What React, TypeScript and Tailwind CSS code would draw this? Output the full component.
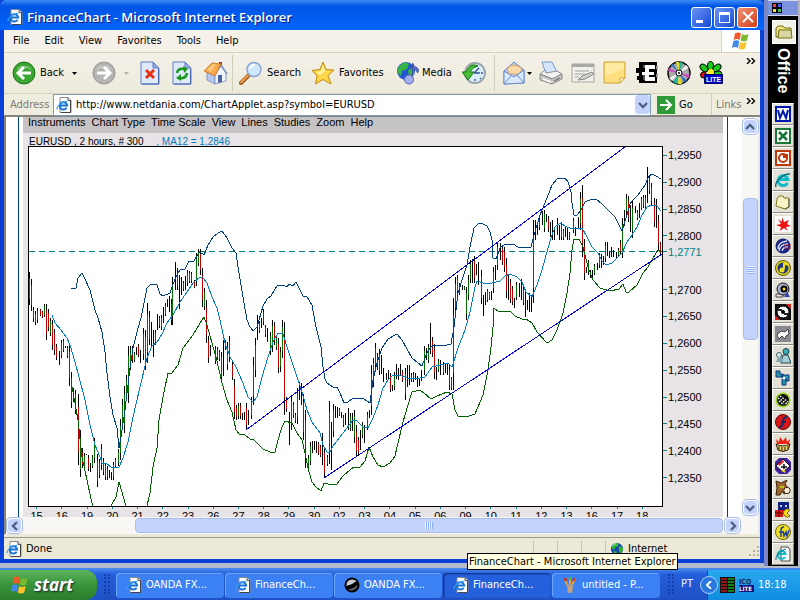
import React, { useState } from "react";

type Candle = [number, number, number, string];

// x, high, low, kind (g = up, r = down, k = flat)
const candles: Candle[] = [
  [29, 272, 305, "g"], [31, 279, 311, "r"], [33, 307, 322, "r"], [35, 311, 325, "g"], [37, 308, 323, "g"], [40, 309, 316, "r"],
  [42, 311, 318, "r"], [44, 304, 317, "g"], [46, 304, 340, "r"], [48, 309, 331, "r"], [50, 318, 336, "g"], [52, 320, 350, "r"],
  [54, 329, 355, "r"], [56, 344, 360, "r"], [59, 351, 365, "k"], [61, 340, 358, "g"], [63, 339, 352, "r"], [65, 346, 348, "k"],
  [67, 346, 358, "r"], [69, 344, 386, "r"], [71, 372, 408, "r"], [73, 388, 402, "g"], [75, 390, 414, "g"], [78, 394, 465, "r"],
  [80, 430, 477, "g"], [82, 448, 468, "r"], [84, 453, 469, "g"], [86, 454, 455, "k"], [88, 455, 471, "r"], [90, 463, 472, "k"],
  [92, 455, 468, "g"], [94, 438, 463, "g"], [97, 454, 487, "r"], [99, 459, 478, "r"], [101, 444, 470, "g"], [103, 458, 475, "r"],
  [105, 463, 480, "r"], [107, 466, 480, "r"], [109, 470, 478, "k"], [111, 472, 480, "k"], [113, 462, 480, "g"], [115, 458, 468, "g"],
  [118, 449, 466, "g"], [120, 419, 460, "g"], [122, 399, 430, "g"], [124, 386, 433, "g"], [126, 375, 400, "g"], [128, 346, 403, "g"],
  [130, 346, 370, "g"], [132, 346, 363, "r"], [134, 352, 362, "g"], [136, 347, 355, "k"], [138, 344, 357, "r"], [140, 350, 363, "k"],
  [143, 328, 360, "g"], [145, 330, 370, "g"], [147, 303, 363, "g"], [149, 311, 345, "r"], [151, 322, 348, "k"], [153, 330, 357, "k"],
  [155, 330, 345, "g"], [157, 314, 330, "k"], [159, 316, 328, "r"], [161, 315, 330, "g"], [163, 307, 323, "k"], [165, 303, 316, "g"],
  [167, 299, 307, "k"], [169, 296, 312, "k"], [171, 299, 325, "r"], [172, 277, 325, "g"], [175, 262, 290, "k"], [177, 268, 290, "r"],
  [179, 275, 309, "k"], [181, 277, 295, "k"], [183, 281, 291, "r"], [185, 276, 290, "k"], [187, 270, 286, "g"], [189, 271, 283, "g"],
  [191, 272, 283, "r"], [194, 280, 288, "r"], [196, 253, 286, "g"], [198, 249, 266, "g"], [200, 249, 275, "r"], [202, 268, 307, "r"],
  [204, 288, 310, "g"], [206, 300, 343, "r"], [208, 336, 363, "r"], [210, 345, 356, "k"], [215, 346, 364, "g"], [217, 347, 360, "r"],
  [219, 350, 361, "r"], [221, 352, 382, "r"], [223, 340, 376, "k"], [225, 340, 350, "g"], [227, 342, 370, "g"], [229, 336, 362, "r"],
  [232, 362, 380, "r"], [234, 379, 419, "r"], [236, 405, 420, "r"], [238, 403, 419, "g"], [240, 403, 419, "r"], [242, 413, 420, "k"],
  [244, 412, 420, "k"], [246, 403, 430, "r"], [248, 410, 425, "k"], [251, 397, 419, "g"], [253, 357, 405, "g"], [255, 338, 377, "g"],
  [257, 315, 340, "k"], [259, 321, 333, "g"], [261, 318, 328, "k"], [263, 309, 325, "r"], [265, 325, 337, "r"], [267, 328, 342, "k"],
  [270, 332, 355, "g"], [272, 320, 352, "g"], [274, 322, 345, "r"], [276, 335, 350, "g"], [278, 338, 373, "r"], [280, 347, 372, "g"],
  [282, 320, 358, "g"], [284, 322, 415, "r"], [286, 397, 412, "r"], [289, 412, 445, "k"], [291, 395, 430, "g"], [293, 402, 418, "r"],
  [295, 413, 423, "r"], [297, 388, 424, "g"], [299, 382, 400, "k"], [301, 383, 405, "k"], [303, 394, 440, "r"], [305, 410, 468, "r"],
  [308, 455, 472, "g"], [310, 442, 465, "g"], [312, 441, 453, "k"], [314, 441, 450, "k"], [316, 441, 453, "k"], [318, 442, 455, "r"],
  [320, 445, 457, "r"], [322, 433, 465, "k"], [324, 448, 478, "r"], [327, 455, 466, "g"], [329, 401, 464, "g"], [331, 422, 470, "k"],
  [333, 404, 437, "g"], [335, 406, 418, "k"], [337, 407, 418, "k"], [339, 408, 416, "r"], [341, 412, 418, "k"], [343, 415, 427, "r"],
  [345, 413, 425, "k"], [348, 408, 430, "k"], [350, 413, 431, "g"], [352, 413, 431, "k"], [354, 410, 443, "g"], [356, 425, 457, "r"],
  [358, 437, 455, "r"], [360, 430, 450, "k"], [362, 422, 438, "g"], [364, 425, 443, "k"], [367, 412, 430, "g"], [369, 410, 418, "k"],
  [371, 365, 415, "g"], [373, 358, 387, "g"], [375, 343, 370, "r"], [377, 353, 370, "r"], [379, 349, 375, "g"], [381, 355, 374, "k"],
  [383, 368, 382, "k"], [386, 373, 380, "k"], [388, 370, 380, "k"], [390, 373, 392, "r"], [392, 385, 391, "k"], [394, 372, 390, "g"],
  [396, 364, 379, "k"], [398, 368, 380, "k"], [400, 364, 375, "k"], [402, 370, 382, "r"], [405, 368, 400, "r"], [407, 365, 387, "k"],
  [409, 365, 385, "k"], [411, 373, 382, "g"], [413, 372, 382, "r"], [415, 373, 380, "k"], [417, 376, 387, "k"], [419, 378, 386, "k"],
  [421, 370, 381, "k"], [424, 346, 375, "g"], [426, 348, 360, "k"], [428, 344, 363, "g"], [430, 323, 354, "k"], [432, 337, 357, "r"],
  [434, 344, 379, "r"], [436, 367, 380, "k"], [438, 359, 372, "g"], [440, 360, 375, "k"], [443, 362, 375, "g"], [445, 363, 373, "k"],
  [447, 363, 375, "k"], [449, 365, 390, "r"], [451, 377, 390, "r"], [453, 298, 390, "g"], [455, 277, 315, "g"], [457, 275, 295, "g"],
  [459, 283, 295, "r"], [462, 285, 290, "k"], [464, 286, 290, "g"], [466, 287, 320, "g"], [468, 275, 300, "g"], [470, 260, 283, "g"],
  [472, 259, 283, "k"], [474, 256, 283, "r"], [476, 264, 275, "k"], [478, 262, 285, "k"], [481, 270, 304, "r"], [483, 295, 316, "k"],
  [485, 292, 305, "k"], [487, 289, 302, "g"], [489, 292, 300, "g"], [491, 291, 300, "k"], [493, 267, 293, "g"], [495, 265, 280, "k"],
  [497, 242, 270, "g"], [500, 243, 260, "k"], [502, 246, 265, "r"], [504, 247, 272, "r"], [506, 258, 298, "r"], [508, 275, 300, "k"],
  [510, 279, 303, "r"], [512, 286, 305, "r"], [514, 298, 308, "k"], [516, 282, 300, "g"], [519, 283, 297, "k"], [521, 279, 300, "k"],
  [523, 286, 305, "r"], [525, 292, 317, "k"], [527, 300, 310, "k"], [529, 293, 312, "k"], [531, 295, 312, "k"], [533, 220, 303, "g"],
  [535, 220, 240, "k"], [537, 223, 235, "k"], [539, 216, 230, "r"], [542, 211, 225, "k"], [544, 210, 232, "g"], [546, 214, 222, "k"],
  [548, 216, 232, "r"], [550, 222, 237, "k"], [552, 220, 240, "k"], [554, 227, 240, "k"], [557, 218, 235, "k"], [559, 225, 240, "k"],
  [561, 222, 240, "r"], [563, 229, 240, "g"], [565, 227, 237, "k"], [567, 228, 240, "k"], [569, 232, 240, "r"], [573, 218, 233, "g"],
  [575, 227, 236, "k"], [578, 217, 228, "k"], [580, 192, 230, "g"], [582, 185, 257, "r"], [584, 239, 280, "r"], [586, 267, 273, "k"],
  [588, 260, 275, "g"], [590, 270, 278, "k"], [592, 270, 280, "k"], [594, 264, 275, "g"], [597, 263, 270, "k"], [599, 253, 268, "g"],
  [601, 254, 268, "k"], [603, 256, 265, "k"], [605, 242, 262, "g"], [607, 242, 256, "k"], [609, 251, 258, "k"], [611, 247, 257, "k"],
  [613, 250, 257, "k"], [616, 252, 259, "k"], [618, 248, 257, "g"], [620, 240, 255, "r"], [622, 218, 258, "g"], [624, 210, 226, "k"],
  [626, 194, 215, "g"], [628, 196, 222, "r"], [630, 205, 232, "k"], [632, 201, 238, "g"], [635, 206, 213, "k"], [637, 210, 220, "g"],
  [639, 203, 218, "k"], [641, 197, 210, "g"], [643, 195, 208, "r"], [645, 195, 210, "g"], [647, 167, 203, "k"], [649, 175, 194, "r"],
  [651, 183, 205, "r"], [654, 198, 227, "r"], [656, 199, 228, "k"], [658, 215, 250, "r"], [660, 242, 255, "r"],
];

const upperBand =
  "71,289 76,288 78,278 82,273 85,279 90,290 95,310 98,318 102,332 105,352 107,373 110,397 113,415 117,428 119,448 121,437 125,410 127,393 130,368 133,348 137,332 141,318 144,303 147,288 151,284 157,285 160,294 163,296 170,293 173,284 178,273 180,270 185,269 189,261 194,261 198,254 200,252 204,255 208,245 213,237 218,233 222,231 227,238 232,248 236,253 238,267 243,297 247,320 250,327 253,331 257,327 263,306 267,299 271,296 277,286 283,285 287,287 289,284 293,286 296,282 300,290 303,296 307,297 312,305 316,327 321,347 323,367 325,379 327,383 333,387 337,387 340,393 344,403 348,402 353,398 363,398 367,401 370,403 373,380 377,363 382,348 388,339 397,334 402,340 412,358 418,363 422,366 427,353 431,347 434,345 447,345 451,344 454,327 458,293 463,277 467,265 470,247 474,228 478,224 481,223 487,226 490,232 492,240 493,258 496,259 500,248 505,244 513,244 518,247 523,248 531,247 534,235 540,215 545,203 552,185 558,178 565,178 568,182 571,192 572,203 574,215 577,215 581,210 585,202 592,199 596,199 602,204 608,210 615,217 619,225 622,231 627,215 630,204 633,200 638,195 645,185 649,176 652,174 656,176 661,179";

const movingAverage =
  "52,315 55,323 61,330 67,338 71,348 78,373 85,400 90,425 95,445 100,457 102,463 106,463 112,468 119,467 123,458 128,442 133,417 140,387 147,358 152,346 157,342 162,334 167,323 173,315 180,302 187,292 193,283 200,277 203,278 207,283 212,297 217,308 220,320 225,343 230,357 236,367 243,383 248,397 253,402 257,397 262,377 268,357 273,342 278,333 283,334 288,350 293,365 298,380 302,392 307,410 312,422 320,433 323,445 327,452 330,452 333,446 343,433 350,424 353,420 357,421 363,427 368,428 373,418 378,405 383,388 388,380 393,375 400,375 407,378 415,379 425,377 432,367 440,365 448,363 452,367 458,348 465,330 470,312 475,287 477,281 483,283 492,283 500,281 505,276 510,274 517,277 522,282 526,292 532,297 537,285 542,270 548,248 552,235 555,227 560,223 567,227 573,229 582,228 587,237 592,247 598,253 602,261 606,265 612,263 617,258 622,253 627,242 632,235 637,227 642,215 647,207 652,205 657,206 661,211";

const lowerBand = [
  "71,382 73,392 78,420 82,457 87,480 91,499 93,506",
  "111,506 116,497 119,482 122,492 126,506",
  "147,506 150,493 153,467 157,448 159,420 163,397 168,373 172,373 178,365 183,348 187,343 193,335 200,323 204,317 207,325 212,343 216,357 222,383 227,400 232,412 236,430 239,434 245,435 250,439 253,439 263,449 270,452 275,452 278,440 282,427 285,421 292,423 297,433 302,440 305,453 308,468 312,482 316,487 321,491 324,483 328,484 337,484 343,476 350,470 354,467 360,467 365,461 369,447 373,457 378,465 383,467 390,463 395,456 398,443 403,422 408,405 412,392 420,390 424,393 431,399 437,396 447,392 452,394 455,410 458,416 469,416 475,414 483,395 488,370 491,347 493,327 494,308 498,311 510,311 515,316 522,319 526,319 532,323 537,332 547,343 552,340 557,330 563,313 567,293 570,273 572,250 574,239 579,239 583,247 588,267 593,280 600,288 610,291 619,289 623,284 626,292 629,292 637,285 643,273 648,267 653,258 658,250 661,252",
];

const dates = ["15", "16", "19", "20", "21", "22", "23", "26", "27", "28", "29", "30", "02", "03", "04", "05", "06", "09", "10", "11", "12", "13", "16", "17", "18"];
const prices = ["1,2950", "1,2900", "1,2850", "1,2800", "", "1,2700", "1,2650", "1,2600", "1,2550", "1,2500", "1,2450", "1,2400", "1,2350"];

function IePage({ className = "w-4 h-4" }: { className?: string }) {
  return (
    <svg viewBox="0 0 16 16" className={className}>
      <path d="M4 .5h8l3 3v12H4z" fill="#fff" stroke="#8a8a8a" />
      <path d="M12 .5v3h3" fill="#d8d8d0" stroke="#555" />
      <path d="M14.5 4v11.5H5" fill="none" stroke="#444" />
      <path d="M10.6 10.8a3.7 3.7 0 1 1 .5-2.4H4.6" fill="none" stroke="#1672d8" strokeWidth="2" />
      <path d="M1.2 12.3C0 9.5 7.5 3.2 11.3 4.5" fill="none" stroke="#3aa0f0" strokeWidth="1.2" />
    </svg>
  );
}

function Flag({ className = "w-5 h-5" }: { className?: string }) {
  return (
    <svg viewBox="0 0 20 19" className={className}>
      <path d="M4 2q3-2 6 0L8.600 8.500q-3-2-6 0z" fill="#ef5a28" />
      <path d="M11 2.600q3 2 6.500 0L16 9q-3 2-6.500 0z" fill="#7cbb2f" />
      <path d="M2.300 9.800q3-2 6 0L7 16.500q-3-2-6 0z" fill="#3f8ae8" />
      <path d="M9.200 10.400q3 2 6.500 0L14.200 17q-3 2-6.500 0z" fill="#fbc22d" />
    </svg>
  );
}

function Globe({ className = "w-4 h-4" }: { className?: string }) {
  return (
    <svg viewBox="0 0 16 16" className={className}>
      <circle cx="8" cy="8" r="7" fill="#1b3fc0" />
      <path d="M3 3l4-2 3 1-1 3-3 1-1 3-3-2zM10 5l4 0 1 4-3 4-2-3zM4 10l4 1-1 4-3-2z" fill="#2fb52f" />
      <path d="M3 4q2-2 4-2" stroke="#b8f0b8" fill="none" />
    </svg>
  );
}

function Caret({ gray = false }: { gray?: boolean }) {
  return (
    <svg viewBox="0 0 5 3" className="w-[5px] h-[3px] shrink-0">
      <path d="M0 0h5L2.500 3z" fill={gray ? "#b8b5a8" : "#000"} />
    </svg>
  );
}

function Overflow() {
  return (
    <svg viewBox="0 0 10 6" className="w-2.5 h-1.5 shrink-0">
      <path d="M1 0l3 3-3 3M5.500 0l3 3-3 3" fill="none" stroke="#000" strokeWidth="1.400" />
    </svg>
  );
}

function Page({ children }: { children: React.ReactNode }) {
  return (
    <svg viewBox="0 0 20 24" className="w-5 h-6">
      <path d="M1 1h12l6 6v16H1z" fill="#dfe9fd" stroke="#6080c8" />
      <path d="M13 1v6h6z" fill="#8fabe8" stroke="#6080c8" />
      <path d="M18.500 8v15H2" fill="none" stroke="#4868b0" />
      {children}
    </svg>
  );
}

function Round({ color, edge, flip = false }: { color: string; edge: string; flip?: boolean }) {
  return (
    <svg viewBox="0 0 24 24" className="w-6 h-6 shrink-0">
      <circle cx="12" cy="12" r="11" fill={color} stroke={edge} />
      <path d="M4 9a9 8 0 0 1 16 0q-8-4-16 0z" fill="#fff" opacity=".35" />
      <path d={flip ? "M5 12h13M12 6l6 6-6 6" : "M19 12H6M12 6l-6 6 6 6"} fill="none" stroke="#fff" strokeWidth="3" />
    </svg>
  );
}

function HomeIcon() {
  return (
    <svg viewBox="0 0 24 24" className="w-6 h-6">
      <path d="M15 1h3v6h-3z" fill="#a83428" />
      <path d="M3 11l8 4v8l-8-4z" fill="#b4c8ee" stroke="#7088b8" strokeWidth=".8" />
      <path d="M11 14l6-9 5 7v8l-11 3z" fill="#f0f5fd" stroke="#7088b8" strokeWidth=".8" />
      <path d="M0 10L8 2l9 1-6 12z" fill="#f8a848" stroke="#c87020" strokeWidth=".8" />
      <path d="M3 9l6-6 3 .5L7 11z" fill="#fcc880" />
      <path d="M17 4l6 9" stroke="#8098c0" strokeWidth="1.500" />
      <path d="M14 14h4v7l-4 1z" fill="#4a62a0" />
    </svg>
  );
}

function SearchIcon() {
  return (
    <svg viewBox="0 0 24 24" className="w-6 h-6 shrink-0">
      <path d="M2 22l8-8" stroke="#a05818" strokeWidth="4" strokeLinecap="round" />
      <path d="M2 21.500l7-7" stroke="#f0a050" strokeWidth="2" strokeLinecap="round" />
      <circle cx="15" cy="8.500" r="7" fill="#cfe9fc" stroke="#8aa4d8" strokeWidth="1.500" />
      <path d="M11 8q1-4 5-4" stroke="#fff" strokeWidth="2" fill="none" />
    </svg>
  );
}

function StarIcon() {
  return (
    <svg viewBox="0 0 24 24" className="w-6 h-6 shrink-0">
      <path d="M12 1l3 7.500 8 .5-6 5.500 3 8.500-8-4.500L4.500 23l1.500-8L1 9.500l8-1z" fill="#fdd649" stroke="#c08a10" strokeLinejoin="round" />
      <path d="M12 4l2 6-5 4L5 11l5-1z" fill="#fff3a8" />
    </svg>
  );
}

function MediaIcon() {
  return (
    <svg viewBox="0 0 24 24" className="w-6 h-6 shrink-0">
      <circle cx="10" cy="10" r="9" fill="#2458d0" />
      <path d="M3 5l6-4 4 2-2 5-5 2-1 5-4-4zM12 9l5-2 1 6-5 4z" fill="#35b545" />
      <path d="M16.500 18V2q1 4 5 5 2 2 0 5 0-3-4-4" fill="#5a70c8" stroke="#4050a0" />
      <circle cx="13" cy="18.500" r="4.500" fill="#a5b0f0" stroke="#5060b8" />
    </svg>
  );
}

function HistoryIcon() {
  return (
    <svg viewBox="0 0 24 24" className="w-6 h-6">
      <circle cx="13" cy="12" r="10" fill="#dcecf8" stroke="#98a4ac" strokeWidth="1.800" />
      <path d="M12 12l5-5M12 12h6M13 4v2M21 12h-2M13 20v-2M19 18l-1-1" stroke="#305890" strokeWidth="1.400" />
      <path d="M16 5Q8 1 4 11H0l6 8 6-8H8q2-5 8-6z" fill="#48c038" stroke="#187818" />
    </svg>
  );
}

function MailIcon() {
  return (
    <svg viewBox="0 0 22 24" className="w-[22px] h-6">
      <path d="M1 10L11 1l10 8v13L1 23z" fill="#b8ccf4" stroke="#6a88c8" />
      <path d="M4 8q7-8 15 0l-2 5H6z" fill="#fbd9a8" stroke="#d8a060" />
      <path d="M1 10l10 6 10-7v13L1 23z" fill="#d8e8fd" stroke="#6a88c8" />
      <path d="M1 23l7-8M21 22l-7-8" stroke="#6a88c8" />
    </svg>
  );
}

function PrinterIcon() {
  return (
    <svg viewBox="0 0 24 24" className="w-6 h-6">
      <path d="M3 1h10l5 10-11 2z" fill="#d4e4fb" stroke="#7a98c8" />
      <path d="M1 13l5-4 1 3 11-2 5 3-9 5z" fill="#f2f2f0" stroke="#909090" />
      <path d="M1 13v6l12 4 10-5v-5l-10 5z" fill="#c8c8c8" stroke="#888" />
      <path d="M4 17l8 3v2l-8-3z" fill="#f8f8f8" />
      <path d="M15 20l6-3" stroke="#808080" strokeWidth="1.500" />
    </svg>
  );
}

function EditIcon() {
  return (
    <svg viewBox="0 0 24 24" className="w-6 h-6">
      <path d="M1 3h22v18H1z" fill="#f0efe8" stroke="#a5a5a0" />
      <path d="M1 3h22v3H1z" fill="#a8a8a4" />
      <path d="M4 10h14M4 13h10M4 16h4" stroke="#a5a5a0" />
      <path d="M7 19l4-4 10-4 2 2-9 5z" fill="#d0d0cc" stroke="#888" />
    </svg>
  );
}

function NoteIcon() {
  return (
    <svg viewBox="0 0 24 24" className="w-6 h-6">
      <path d="M1 1h21v16l-5 5H1z" fill="#fddf80" stroke="#d0a030" />
      <path d="M2 2h19v6L2 15z" fill="#fff0b0" opacity=".7" />
      <path d="M22 17h-5v5z" fill="#fff8d8" stroke="#d0a030" />
    </svg>
  );
}

function EIcon() {
  return (
    <svg viewBox="0 0 24 24" className="w-6 h-6">
      <path d="M4 1h18v21H4v-3H2v-4h2v-3H1V7h3z" fill="#000" />
      <path d="M8 4h2v3H8zM8 13h2v6H8z" fill="#555" />
      <path d="M10 4h10v4h-6v3h5v3h-5v2h6v4H10v-6H7v-3h3z" fill="#fff" />
      <path d="M22 5v3M22 13v3" stroke="#999" strokeWidth="2" />
    </svg>
  );
}

function DiscIcon() {
  return (
    <svg viewBox="0 0 24 24" className="w-6 h-6">
      <circle cx="12" cy="12" r="11" fill="#a8a8a8" stroke="#111" strokeWidth="1.500" />
      <path d="M12 12L9 1h3zM12 12l3 11h-4z" fill="#e8d820" />
      <path d="M12 12L13 1l3 1zM12 12L10 23l-4-2z" fill="#20b8a0" />
      <path d="M12 12L1 10l1-3zM12 12l11 2-1 3z" fill="#d040c0" />
      <path d="M12 12L4 4l2-1zM12 12l8 8-3 1z" fill="#2070d0" />
      <path d="M12 12l7-8 3 3zM12 12l-7 8-3-3z" fill="#f0f0f0" />
      <circle cx="12" cy="12" r="3" fill="#fff" stroke="#000" />
      <circle cx="12" cy="12" r="1" fill="#000" />
    </svg>
  );
}

function LiteIcon() {
  return (
    <svg viewBox="0 0 24 24" className="w-6 h-6">
      <g fill="#19c819" stroke="#000">
        <ellipse cx="11.500" cy="5" rx="3" ry="4.500" />
        <ellipse cx="5" cy="7" rx="3" ry="4.500" transform="rotate(-50 5 7)" />
        <ellipse cx="18" cy="7" rx="3" ry="4.500" transform="rotate(50 18 7)" />
        <ellipse cx="19" cy="13" rx="4" ry="3" />
      </g>
      <circle cx="4.500" cy="14" r="3" fill="#e01010" stroke="#000" />
      <circle cx="12" cy="11" r="3" fill="#fff020" />
      <path d="M5.500 13.500h18v9h-18z" fill="#0000d0" stroke="#000060" />
      <text x="14.500" y="21" textAnchor="middle" fill="#fff" fontSize="7" fontWeight="700" fontFamily="Liberation Sans">LITE</text>
    </svg>
  );
}

const Divider = () => <span className="w-px h-9 bg-[#cfccba] shrink-0" />;

// shortcuts drawn on the Office bar, top to bottom
const shortcuts: [string, React.ReactNode][] = [
  ["Word", <><path d="M0 0h16v16H0z" fill="#0018b0" /><path d="M2 2h12v12H2z" fill="#fff" /><path d="M3 4l2 8 3-7 3 7 2-8" fill="none" stroke="#0018b0" strokeWidth="2" /></>],
  ["Excel", <><path d="M0 0h16v16H0z" fill="#187838" /><path d="M2 2h12v12H2z" fill="#fff" /><path d="M4 4l8 8M12 4l-8 8" stroke="#187838" strokeWidth="2.500" /></>],
  ["PowerPoint", <><path d="M0 0h16v16H0z" fill="#c03808" /><path d="M2 2h12v12H2z" fill="#fff" /><circle cx="8" cy="8" r="4" fill="none" stroke="#c03808" strokeWidth="2" /><path d="M8 8h5V4H8z" fill="#c03808" /></>],
  ["Internet Explorer", <><path d="M12.500 11a5 5 0 1 1 .5-3.500H5" fill="none" stroke="#10b8c8" strokeWidth="3" /><path d="M1 15C-1 10 9 1 15 2" fill="none" stroke="#087080" strokeWidth="1.500" /></>],
  ["Folder", <><path d="M2 5l2-3h4l1 2h5v9l-4 2-9-3z" fill="#f8f4c8" stroke="#807818" /><path d="M14 5v8l-4 2" stroke="#555" fill="none" /></>],
  ["Splat", <><path d="M0 0h16v16H0z" fill="#fff" /><path d="M7 1l2 5 5-2-2 4 4 2-5 1 2 4-4-3-4 3 1-4-5-2 5-1-3-5 4 3z" fill="#f01010" /></>],
  ["Net", <><circle cx="8" cy="8" r="7.500" fill="#182080" /><path d="M3 11q0-7 9-8M4 13q1-7 9-7M7 13q1-4 6-4" fill="none" stroke="#d8e0ff" strokeWidth="1.300" /><path d="M9 7h7M9 10h7" stroke="#a02030" /></>],
  ["Music", <><circle cx="8" cy="8" r="7.500" fill="#e8d810" stroke="#605800" /><circle cx="8" cy="8" r="5.500" fill="#203880" /><path d="M9 3v6M9 3l4 2" stroke="#f0e020" strokeWidth="2" /><circle cx="7" cy="10" r="2.500" fill="#f0e020" /></>],
  ["Camera", <><path d="M1 12h7v3H1z" fill="#e8e8e8" stroke="#444" /><circle cx="8" cy="7" r="6" fill="#a8b0d0" stroke="#111" /><circle cx="9" cy="7" r="3.500" fill="#000" /><circle cx="9" cy="7" r="1.500" fill="#f8e020" /><path d="M12 10l3 5H9z" fill="#3040b0" /></>],
  ["Player", <><path d="M0 0h16v16H0z" fill="#111" /><path d="M11 0h5v5zM0 11v5h5z" fill="#e02020" /><circle cx="8" cy="8" r="6" fill="#fff" stroke="#000" /><circle cx="8" cy="8" r="2" fill="#000" /><path d="M3 6h4M9 10h4" stroke="#222" strokeWidth="2" /></>],
  ["Fish", <><path d="M0 0h16v16H0z" fill="#888890" /><path d="M2 9l4-4 4 1 3-3 1 5-3 2-1 3-3-3-3 3z" fill="#fff" stroke="#444" /></>],
  ["Messenger", <><circle cx="11" cy="3.500" r="3" fill="#38b0b8" stroke="#204048" /><path d="M6 15l2-8h5l3 8z" fill="#a8d0d8" stroke="#204048" /><circle cx="4" cy="7" r="2.500" fill="#e0f0f0" stroke="#406068" /><path d="M1 14l2-5h4l1 5z" fill="#80a8b0" /></>],
  ["Puzzle", <><path d="M1 1h4v3h3v3H1zM7 5h7v6h-3V8H7zM7 9h4v6H7z" fill="#2098a8" stroke="#103080" /><circle cx="9" cy="8" r="1.500" fill="#fff" /></>],
  ["Checker", <><circle cx="8" cy="8" r="7.500" fill="#98d818" /><circle cx="8" cy="8" r="6" fill="#111" /><path d="M3 6l9 6M5 4l8 6M4 9l5 4" stroke="#fff" strokeDasharray="1.500 1.500" strokeWidth="1.500" /></>],
  ["Flash", <><circle cx="8" cy="8" r="7.500" fill="#d81818" stroke="#600" /><path d="M12 3q-4 0-4 5t-4 5M6 8h5" fill="none" stroke="#182868" strokeWidth="2" /></>],
  ["Burner", <><path d="M2 8L1 3l3 3 1-5 3 4 3-4 1 5 3-3-1 5z" fill="#f02010" /><path d="M1 8q7 4 14 0l-2 6q-5 3-10 0z" fill="#e8d070" stroke="#302000" /><path d="M4 10v4M7 11v4M10 11v4M13 10v3" stroke="#302000" /></>],
  ["Cards", <><path d="M4 0h8l4 4v8l-4 4H4l-4-4V4z" fill="#4020a0" /><path d="M8 1l7 7-7 6-7-6z" fill="#fff" stroke="#111" /><path d="M3 6l5-4 1 2-5 4z" fill="#e02020" /><path d="M6 9h6M9 6v5" stroke="#111" strokeWidth="1.500" /><path d="M6 13l3-2 2 4z" fill="#f0d820" /></>],
  ["Donkey", <><path d="M1 1l5 2 6-3-2 4 3 4v4l-4 2-2-3-2 4H1l1-7z" fill="#a06830" stroke="#402008" /><circle cx="12" cy="10.500" r="3.200" fill="#f8f0e0" stroke="#402008" /><path d="M5 7h4" stroke="#b8c818" strokeWidth="2" /></>],
  ["Blocks", <><path d="M3 0h11v9H3z" fill="#102080" /><path d="M6 3v2M11 3v2" stroke="#fff" strokeWidth="1.500" /><path d="M0 8h8v7H0z" fill="#d81818" /><path d="M4 8v7M0 11h8" stroke="#600" /><path d="M15 8a4 4 0 1 0 0 6l-3-3z" fill="#f8e010" stroke="#806000" /></>],
  ["Firework", <><circle cx="8" cy="8" r="7.500" fill="#f0e020" stroke="#706800" /><path d="M6 13V6q0-3 3-3M4 8h4M8 7l1 5 2-4 1 4 2-6" fill="none" stroke="#2040a0" strokeWidth="1.500" /></>],
  ["Web page", <><path d="M6 1h7l2 3v11H6z" fill="#fff" stroke="#444" /><path d="M10 11a4 4 0 1 1 .5-3H3" fill="none" stroke="#10b8c8" strokeWidth="2" /><path d="M1 14C0 10 6 4 11 3" fill="none" stroke="#087080" /></>],
];

function OfficeBar() {
  return (
    <aside className="w-9 shrink-0 flex flex-col bg-black border-l-4 border-[#7b86c6] border-r-2 border-r-[#b5b5c5] pl-1 mb-0.5">
      <div className="h-4 -ml-1 flex items-center pl-1 bg-[#7b93dd] border-y border-[#d8d8e8]">
        <svg viewBox="0 0 10 10" className="w-2.5 h-2.5 bg-black">
          <path d="M1 1h3v3H1z" fill="#f04040" />
          <path d="M6 1h3v3H6z" fill="#4060ff" />
          <path d="M1 6h3v3H1z" fill="#f0e060" />
          <path d="M6 6h3v3H6z" fill="#40c060" />
        </svg>
      </div>
      <button aria-label="Office folder" className="mt-1 w-6 h-6 shrink-0 flex items-center justify-center bg-[#f3f2ea] border border-white">
        <svg viewBox="0 0 18 16" className="w-[18px] h-4">
          <path d="M1 4l2-2h5l2 2h6v9H1z" fill="#ece080" stroke="#707010" />
          <path d="M4 6h12l1 8H3z" fill="#d8d8a0" stroke="#707010" />
        </svg>
      </button>
      <div className="h-[59px] w-[22px] pt-1 flex items-center text-[16px] leading-[22px] font-bold text-white [writing-mode:vertical-rl] font-['Liberation_Sans',sans-serif]">
        Office
      </div>
      <div className="flex flex-col w-[22px]">
        {shortcuts.map(([name, art]) => (
          <button key={name} aria-label={name} className="h-[22px] flex items-center justify-center bg-[#e4e1d6] border border-t-white border-l-white border-r-[#8a8880] border-b-[#8a8880]">
            <svg viewBox="0 0 16 16" className="w-4 h-4">{art}</svg>
          </button>
        ))}
      </div>
    </aside>
  );
}

function TitleBar() {
  const btn = "w-[21px] h-[21px] rounded-[3px] border border-white flex items-center justify-center";
  return (
    <header className="h-[30px] shrink-0 flex items-center pl-[7px] pr-1.5 pt-1 rounded-t-md bg-gradient-to-b from-[#3a8cf8] via-[#0054e3] via-20% to-[#0466fc]">
      <IePage />
      <h1 className="ml-1 flex-1 truncate text-[13px] leading-5 font-semibold text-white [text-shadow:1px_1px_#0a1883] font-['Open_Sans','Noto_Sans',sans-serif]">
        FinanceChart - Microsoft Internet Explorer
      </h1>
      <div className="flex gap-0.5">
        <button aria-label="Minimize" className={`${btn} bg-gradient-to-br from-[#6a95f5] to-[#1846d0]`}>
          <span className="w-[7px] h-[3px] mt-2 mr-1 bg-white" />
        </button>
        <button aria-label="Maximize" className={`${btn} bg-gradient-to-br from-[#6a95f5] to-[#1846d0]`}>
          <span className="w-[11px] h-[11px] border border-t-[3px] border-white" />
        </button>
        <button aria-label="Close" className={`${btn} bg-gradient-to-br from-[#f09070] to-[#d03a10]`}>
          <svg viewBox="0 0 12 12" className="w-3 h-3">
            <path d="M1 1l10 10M11 1L1 11" stroke="#fff" strokeWidth="2" />
          </svg>
        </button>
      </div>
    </header>
  );
}

function Toolbar() {
  return (
    <div className="h-[41px] shrink-0 flex items-center pl-2 pr-1 bg-gradient-to-b from-[#f5f0e8] to-[#ecebdb] border-b border-[#d8d2bd]">
      <button className="w-20 flex items-center shrink-0">
        <Round color="#3aa530" edge="#207818" />
        <span className="ml-1 w-8 text-left">Back</span>
        <Caret />
      </button>
      <button aria-label="Forward" className="w-12 flex items-center gap-2 shrink-0">
        <Round color="#b4b4b2" edge="#949490" flip />
        <Caret gray />
      </button>
      <button aria-label="Stop" className="w-8 shrink-0">
        <Page><path d="M6 9l8 8M14 9l-8 8" stroke="#e83010" strokeWidth="3" /></Page>
      </button>
      <button aria-label="Refresh" className="w-8 shrink-0">
        <Page>
          <path d="M5 12q1-5 7-4M15 12q-1 6-7 5" fill="none" stroke="#189818" strokeWidth="2.500" />
          <path d="M11 5l5 3-4 4zM9 13l-5 4 5 3z" fill="#189818" />
        </Page>
      </button>
      <button aria-label="Home" className="w-7 shrink-0"><HomeIcon /></button>
      <Divider />
      <button className="ml-1.5 w-[72px] flex items-center gap-1 shrink-0"><SearchIcon />Search</button>
      <button className="w-[85px] flex items-center gap-1 shrink-0"><StarIcon />Favorites</button>
      <button className="w-[66px] flex items-center gap-0.5 shrink-0"><MediaIcon />Media</button>
      <button aria-label="History" className="w-8 shrink-0"><HistoryIcon /></button>
      <Divider />
      <button aria-label="Mail" className="ml-2 w-9 flex items-center gap-0.5 shrink-0"><MailIcon /><Caret /></button>
      <button aria-label="Print" className="w-8 shrink-0"><PrinterIcon /></button>
      <button aria-label="Edit" className="w-8 shrink-0"><EditIcon /></button>
      <button aria-label="Note" className="w-8 shrink-0"><NoteIcon /></button>
      <button aria-label="Editor" className="w-8 shrink-0"><EIcon /></button>
      <button aria-label="Disc" className="w-8 shrink-0"><DiscIcon /></button>
      <button aria-label="ICQ Lite" className="w-8 shrink-0"><LiteIcon /></button>
      <button aria-label="More tools" className="ml-auto mb-6"><Overflow /></button>
    </div>
  );
}

function AddressBar() {
  const [url, setUrl] = useState("http://www.netdania.com/ChartApplet.asp?symbol=EURUSD");
  return (
    <div className="h-[23px] shrink-0 flex items-center pl-1.5 pr-1 bg-[#efede0] border-b-2 border-[#85837a]">
      <label htmlFor="address" className="w-[43px] text-[#7d7b70]">Address</label>
      <div className="flex-1 h-[22px] flex items-center pl-0.5 bg-white border border-[#7f9db9]">
        <IePage />
        <input id="address" value={url} onChange={(e) => setUrl(e.target.value)} className="flex-1 min-w-0 ml-1 outline-none" />
        <button aria-label="Show addresses" className="w-[15px] h-[19px] flex items-center justify-center bg-[#c3d3fb] rounded-sm">
          <Chevron d="M1 1l4 4 4-4" />
        </button>
      </div>
      <button className="w-[60px] flex items-center gap-1 pl-1.5">
        <svg viewBox="0 0 18 18" className="w-[18px] h-[18px]">
          <path d="M0 0h18v18H0z" fill="#2f9a38" />
          <path d="M3 9h10M9 4l5 5-5 5" fill="none" stroke="#fff" strokeWidth="2" />
        </svg>
        Go
      </button>
      <div className="h-full w-[45px] flex items-center justify-between pl-1 border-l border-[#d0ccba] text-[#7d7b70]">
        Links
        <span className="mb-2"><Overflow /></span>
      </div>
    </div>
  );
}

function Chevron({ d }: { d: string }) {
  return (
    <svg viewBox="0 0 10 6" className="w-2.5 h-1.5 overflow-visible">
      <path d={d} fill="none" stroke="#4d6185" strokeWidth="2.400" />
    </svg>
  );
}

function Plot() {
  return (
    <svg viewBox="28 146 635 361" preserveAspectRatio="none" shapeRendering="crispEdges" className="block flex-1 min-w-0 h-full bg-white">
      <path d="M29 251.500H662" stroke="#008484" strokeDasharray="6 4" />
      {candles.map(([x, high, low, kind]) => {
        const inset = Math.round((low - high) * 0.18);
        return (
          <g key={x}>
            <rect x={x} y={high} width="1" height={low - high} fill="#000" />
            {kind !== "k" && (
              <rect x={x} y={high + inset} width="1" height={low - high - inset * 2} fill={kind === "g" ? "#007000" : "#c00000"} />
            )}
          </g>
        );
      })}
      <g fill="none" strokeWidth="1">
        <polyline points={upperBand} stroke="#004080" />
        <polyline points={movingAverage} stroke="#0080c0" />
        {lowerBand.map((points) => (
          <polyline key={points} points={points} stroke="#006000" />
        ))}
        <path d="M246 430L625 147M324 478L662 254" stroke="#0000e0" />
        <rect x="28.500" y="146.500" width="634" height="360" stroke="#000" />
      </g>
    </svg>
  );
}

function ChartApplet() {
  return (
    <div className="flex-1 min-w-0 flex flex-col bg-[#e7e3e7] text-black text-[11px] font-['Liberation_Sans',sans-serif]">
      <nav className="h-4 shrink-0 flex gap-1.5 pl-[5px] overflow-hidden bg-[#c6c3c6] leading-[11px]">
        {["Instruments", "Chart Type", "Time Scale", "View", "Lines", "Studies", "Zoom", "Help"].map((item) => (
          <button key={item} className="h-[11px]">{item}</button>
        ))}
      </nav>
      <p className="h-[13px] shrink-0 pl-1.5 pt-0.5 text-[10px] leading-[13px]">
        EURUSD , 2 hours, # 300 <span className="ml-2.5 text-[#0080c0]">, MA12 = 1,2846</span>
      </p>
      <div className="flex-1 min-h-0 flex pl-[5px]">
        <Plot />
        <div className="relative w-[60px] shrink-0 flex flex-col -mt-1 pb-4">
          {prices.map((price) => (
            <div key={price} className="flex-1 flex items-center gap-px">
              {price && <span className="w-1 h-px bg-[#008484]" />}
              {price}
            </div>
          ))}
          <div className="absolute left-0 top-[30%] -translate-y-1/2 flex items-center gap-px text-[#008484]">
            <span className="w-1 h-px bg-[#008484]" />
            1,2771
          </div>
        </div>
      </div>
      <div className="h-2.5 shrink-0 flex overflow-hidden pl-px pr-[68px]">
        {dates.map((date, i) => (
          <div key={i} className="flex-1 flex flex-col items-center leading-[14px]">
            <span className="w-px h-0.5 shrink-0 bg-[#008484]" />
            {date}
          </div>
        ))}
      </div>
    </div>
  );
}

const scrollButton = "w-[15px] h-[15px] shrink-0 rounded-sm border border-white bg-[#c3d3fb] flex items-center justify-center outline outline-1 outline-[#a8bcec]";

function VScroll() {
  return (
    <div className="w-4 shrink-0 flex flex-col items-center py-0.5 bg-[#f8f7f3]">
      <button aria-label="Scroll up" className={scrollButton}><Chevron d="M1 5l4-4 4 4" /></button>
      <div className="flex-[64]" />
      <div className="flex-[140] w-[15px] rounded-sm bg-[#c3d3fb] border border-[#a8bcec] flex flex-col items-center justify-center gap-px">
        {[0, 1, 2, 3].map((n) => <span key={n} className="w-[7px] h-px bg-[#eef4fe] shadow-[0_1px_#8cb0f8]" />)}
      </div>
      <div className="flex-[160]" />
      <button aria-label="Scroll down" className={scrollButton}><Chevron d="M1 1l4 4 4-4" /></button>
    </div>
  );
}

function HScroll() {
  return (
    <div className="h-[17px] shrink-0 flex items-center pl-px pr-[18px] bg-[#f8f7f3]">
      <button aria-label="Scroll left" className={scrollButton}><Chevron d="M7-1L3 3l4 4" /></button>
      <div className="flex-[113]" />
      <div className="flex-[587] h-[15px] rounded-sm bg-[#c3d3fb] border border-[#a8bcec] flex items-center justify-center gap-px">
        {[0, 1, 2, 3].map((n) => <span key={n} className="w-px h-[7px] bg-[#eef4fe] shadow-[1px_0_#8cb0f8]" />)}
      </div>
      <button aria-label="Scroll right" className={`${scrollButton} ml-0.5`}><Chevron d="M3-1l4 4-4 4" /></button>
    </div>
  );
}

function StatusBar() {
  return (
    <footer className="h-[21px] shrink-0 flex items-center pl-0.5 bg-[#ece9d8]">
      <IePage />
      <span className="ml-1 flex-1">Done</span>
      {[0, 1, 2].map((n) => <span key={n} className="w-6 h-4 shrink-0 border-l border-[#c8c5b4]" />)}
      <div className="w-[155px] h-4 flex items-center gap-1 pl-1 border-l border-[#c8c5b4]">
        <Globe className="w-3.5 h-3.5" />
        Internet
        <svg viewBox="0 0 12 12" className="w-3 h-3 ml-auto mt-1.5 fill-[#b8b4a2]">
          <path d="M9 0h2v2H9zM9 4h2v2H9zM5 4h2v2H5zM9 8h2v2H9zM5 8h2v2H5zM1 8h2v2H1z" />
        </svg>
      </div>
    </footer>
  );
}

function Browser() {
  return (
    <section className="flex-1 min-w-0 flex flex-col bg-[#0a3fd8]">
      <TitleBar />
      <div className="flex-1 min-h-0 flex flex-col mx-1 mb-1 bg-[#ece9d8]">
        <nav className="h-[23px] shrink-0 flex items-center gap-[15px] pl-[9px] bg-[#f5f0e8] border-b border-[#d8d2bd]">
          {["File", "Edit", "View", "Favorites", "Tools", "Help"].map((item) => (
            <button key={item}>{item}</button>
          ))}
          <span className="ml-auto w-[39px] h-full flex items-center justify-center bg-white border-l border-[#d8d2bd]"><Flag /></span>
        </nav>
        <Toolbar />
        <AddressBar />
        <main className="flex-1 min-h-0 flex flex-col border-l-2 border-[#85837a] pr-0.5">
          <div className="flex-1 min-h-0 flex bg-white">
            <div className="w-[13px] shrink-0 border-r border-[#004080]" />
            <div className="w-1 shrink-0" />
            <ChartApplet />
            <div className="w-1 shrink-0" />
            <div className="w-[15px] shrink-0 border-l border-[#004080]" />
            <VScroll />
          </div>
          <HScroll />
        </main>
        <div className="h-1 shrink-0 border-b border-[#9a988c]" />
        <StatusBar />
      </div>
    </section>
  );
}

const tasks = [
  { label: "OANDA FX...", icon: "ie" },
  { label: "FinanceCh...", icon: "ie" },
  { label: "OANDA FX...", icon: "ball" },
  { label: "FinanceCh...", icon: "ie", active: true },
  { label: "untitled - P...", icon: "paint" },
];

function TaskIcon({ kind }: { kind: string }) {
  if (kind === "ball")
    return (
      <svg viewBox="0 0 16 16" className="w-4 h-4 shrink-0">
        <circle cx="8" cy="8" r="7.500" fill="#000" />
        <path d="M2.500 9Q2 3 8 2.500q3 0 4.500 1.500Q8 8 2.500 9z" fill="#c8ccd0" />
        <path d="M4 12.500q6-1 9.500-5 0 5-5 6-2.500.5-4.500-1z" fill="#585c60" />
      </svg>
    );
  if (kind === "paint")
    return (
      <svg viewBox="0 0 16 16" className="w-4 h-4 shrink-0">
        <path d="M5 8L3 2M8 8V1M10 8l3-6" stroke="#e8a038" strokeWidth="2" />
        <path d="M3 1l1 3M12.500 1l-1 3" stroke="#d83020" strokeWidth="2.500" />
        <path d="M8 0v3" stroke="#58b038" strokeWidth="2.500" />
        <path d="M5 8h6l-1 8H6z" fill="#c8a078" stroke="#8898b0" />
      </svg>
    );
  return <IePage className="w-4 h-4 shrink-0" />;
}

const Dots = () => <span className="w-1.5 h-5 border-x-2 border-dotted border-[#163fa8]" />;

function TaskBar() {
  return (
    <footer className="h-8 shrink-0 flex items-center text-white bg-gradient-to-b from-[#4a8cf0] via-[#245edb] via-20% to-[#1f50c4]">
      <button className="w-[97px] h-[30px] mt-0.5 pl-2.5 flex items-center gap-1 rounded-r-xl bg-gradient-to-b from-[#5cb45c] via-[#389438] to-[#2c7c2c] text-[17px] font-bold italic [text-shadow:1px_1px_2px_#123] font-['Noto_Sans','Open_Sans',sans-serif]">
        <Flag />
        start
      </button>
      <div className="w-[19px] flex justify-center"><Dots /></div>
      <div className="flex-1 min-w-0 flex gap-px">
        {tasks.map((task, i) => (
          <button
            key={i}
            className={`flex-1 min-w-0 h-[25px] mt-0.5 px-2.5 flex items-center gap-1 rounded-sm ${
              task.active ? "bg-[#2560dc] shadow-[inset_1px_1px_2px_#0c2a78]" : "bg-[#3c81f3] shadow-[inset_1px_1px_#6aa4fa]"
            }`}
          >
            <TaskIcon kind={task.icon} />
            <span className="truncate">{task.label}</span>
          </button>
        ))}
      </div>
      <div className="w-[21px] flex justify-center"><Dots /></div>
      <span className="w-[26px] text-[#eef]">PT</span>
      <div className="relative w-[93px] h-[30px] mt-0.5 flex items-center gap-1 pl-3 bg-gradient-to-b from-[#28a8f0] to-[#108ce0] border-l border-[#0a4ab0]">
        <button aria-label="Show hidden icons" className="absolute -left-2 top-1.5 w-[18px] h-[18px] rounded-full border border-[#a8d4fa] bg-[#2878e0] flex items-center justify-center">
          <svg viewBox="0 0 6 8" className="w-1.5 h-2"><path d="M5 0L1 4l4 4" fill="none" stroke="#fff" strokeWidth="2" /></svg>
        </button>
        <svg viewBox="0 0 15 16" className="w-[15px] h-4 shrink-0">
          <path d="M0 0h15v16H0z" fill="#101010" />
          <path d="M1 2h6M1 5h6M1 8h6M1 11h6M1 14h6" stroke="#901818" strokeWidth="2" />
          <path d="M8 2h6M8 5h6M8 8h6M8 11h6M8 14h6" stroke="#108018" strokeWidth="2" />
        </svg>
        <svg viewBox="0 0 15 14" className="w-[15px] h-3.5 shrink-0 font-bold">
          <text x="0" y="6" fontSize="7" fill="#203050">ICQ</text>
          <path d="M0 7h15v7H0z" fill="#101080" />
          <text x="0" y="13" fontSize="6" fill="#fff">LITE</text>
        </svg>
        <time>18:18</time>
      </div>
    </footer>
  );
}

export default function App() {
  return (
    <div className="relative h-screen w-full flex flex-col overflow-hidden bg-[#b4bccb] text-[11px] leading-4 text-black font-['DejaVu_Sans_Condensed','Liberation_Sans',sans-serif]">
      <div className="flex-1 min-h-0 flex">
        <div className="flex-1 min-w-0 flex mb-[5px]">
          <Browser />
        </div>
        <OfficeBar />
      </div>
      <TaskBar />
      <div role="tooltip" className="absolute left-[467px] bottom-[30px] h-[17px] px-px border border-black bg-[#ffffe1] whitespace-nowrap">
        FinanceChart - Microsoft Internet Explorer
      </div>
    </div>
  );
}
